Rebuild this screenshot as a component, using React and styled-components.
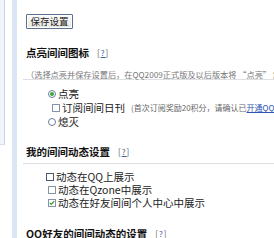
import React from "react";
import styled, { createGlobalStyle } from "styled-components";

const Global = createGlobalStyle`
  html, body { margin: 0; padding: 0; background: #fff; overflow: hidden; }
  body { width: 274px; height: 238px; font-family: "Noto Sans CJK SC", "Noto Sans", sans-serif; }
`;

const Page = styled.div`
  display: flex;
  width: 274px;
  height: 238px;
  overflow: hidden;
`;

const SidePanel = styled.div`
  width: 4px;
  height: 144px;
  flex: none;
  background: #f1f5fa;
  border-right: 1px solid #c9d5e5;
  border-bottom: 1px solid #d5dfeb;
`;

const Stripe = styled.div`
  width: 5px;
  flex: none;
  margin-left: 7px;
  background: #dbe6f5;
`;

const Content = styled.div`
  flex: 1;
  min-width: 0;
  padding: 14px 0 0 6px;
  white-space: nowrap;
  overflow: hidden;
`;

const SaveButton = styled.button`
  display: block;
  height: 15px;
  width: 47px;
  margin-left: 3px;
  padding: 0;
  border: 1px solid #5b6f8f;
  border-radius: 1px;
  background: linear-gradient(#fbfbfb, #e6e6e0);
  box-shadow: inset 0 0 0 1px #fff;
  font-family: inherit;
  font-size: 9.5px;
  line-height: 13px;
  color: #222;
`;

const SectionHead = styled.div`
  margin-top: ${(p) => p.$top}px;
  padding-bottom: ${(p) => p.$pad}px;
  border-bottom: 1px solid #dcdfe3;
  padding-left: 3px;
`;

const Title = styled.div`
  display: flex;
  align-items: center;
  height: 10px;
  font-size: 10.5px;
  font-weight: 700;
  color: #111;
  line-height: 10px;
`;

const Help = styled.span`
  margin-left: 8px;
  font-size: 8px;
  font-weight: 400;
  color: #555;
  letter-spacing: 1px;
  u { color: #3a5b9a; }
`;

const Desc = styled.div`
  margin-top: 11px;
  height: 10px;
  line-height: 10px;
  font-size: 8.2px;
  color: #777;
`;

const Options = styled.div`
  margin-top: ${(p) => p.$top}px;
  padding-left: ${(p) => p.$indent}px;
`;

const Row = styled.div`
  display: flex;
  align-items: center;
  height: ${(p) => p.$h}px;
  line-height: ${(p) => p.$h}px;
  padding-left: ${(p) => p.$sub || 0}px;
  font-size: 10.5px;
  color: #222;
`;

const Radio = styled.span`
  box-sizing: border-box;
  width: 8px;
  height: 8px;
  border-radius: 50%;
  border: 1px solid #6b7d98;
  background: #fff;
  margin-right: 2px;
  display: flex;
  align-items: center;
  justify-content: center;
  flex: none;
  &::after {
    content: "";
    width: 4px;
    height: 4px;
    border-radius: 50%;
    background: ${(p) => (p.$on ? "#3aa53a" : "transparent")};
  }
`;

const Check = styled.span`
  box-sizing: border-box;
  width: 8px;
  height: 8px;
  border: 1px solid ${(p) => (p.$focus ? "#4a5a70" : "#8593a8")};
  background: #fff;
  margin-right: 2px;
  flex: none;
  display: flex;
  align-items: center;
  justify-content: center;
`;

const Note = styled.span`
  margin-left: 6px;
  font-size: 8px;
  color: #666;
  a { color: #2b55b0; text-decoration: underline; }
`;

const Tick = () => (
  <svg width="6" height="6" viewBox="0 0 6 6">
    <path d="M0.8 2.8 L2.4 4.4 L5.2 1.2" fill="none" stroke="#2f9a2f" strokeWidth="1.2" />
  </svg>
);

export default function App() {
  return (
    <>
      <Global />
      <Page>
        <SidePanel />
        <Stripe />
        <Content>
          <SaveButton>保存设置</SaveButton>

          <SectionHead $top={19} $pad={0}>
            <Title>
              点亮间间图标<Help>[<u>?</u>]</Help>
            </Title>
            <Desc>（选择点亮并保存设置后，在QQ2009正式版及以后版本将 “点亮” 您的间间图标）</Desc>
          </SectionHead>
          <Options $top={7} $indent={25}>
            <Row $h={14}>
              <Radio $on />点亮
            </Row>
            <Row $h={14} $sub={4}>
              <Check />订阅间间日刊
              <Note>
                (首次订阅奖励20积分，请确认已<a>开通QQ</a>邮箱)
              </Note>
            </Row>
            <Row $h={14}>
              <Radio />熄灭
            </Row>
          </Options>

          <SectionHead $top={18} $pad={6}>
            <Title>
              我的间间动态设置<Help>[<u>?</u>]</Help>
            </Title>
          </SectionHead>
          <Options $top={6} $indent={23}>
            <Row $h={13}>
              <Check $focus />动态在QQ上展示
            </Row>
            <Row $h={13} $sub={2}>
              <Check />动态在Qzone中展示
            </Row>
            <Row $h={13} $sub={2}>
              <Check>
                <Tick />
              </Check>
              动态在好友间间个人中心中展示
            </Row>
          </Options>

          <SectionHead $top={20} $pad={6}>
            <Title>
              QQ好友的间间动态的设置<Help>[<u>?</u>]</Help>
            </Title>
          </SectionHead>
        </Content>
      </Page>
    </>
  );
}
